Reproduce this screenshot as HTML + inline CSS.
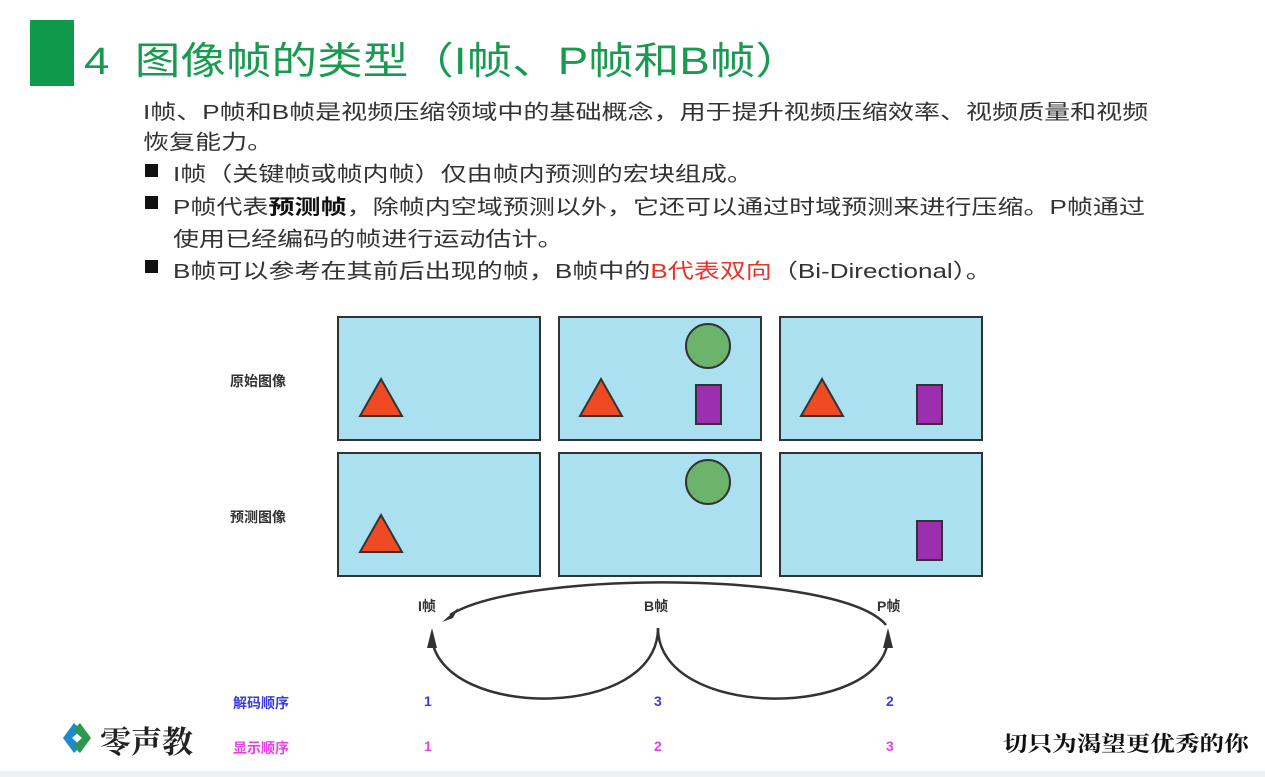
<!DOCTYPE html>
<html><head><meta charset="utf-8"><style>
body{margin:0;width:1265px;height:777px;background:#fff;position:relative;overflow:hidden;font-family:"Liberation Sans","Noto Sans CJK SC",sans-serif;}
.a{position:absolute;white-space:nowrap;}
.t{font-size:20.5px;color:#333;transform:scaleX(1.27);transform-origin:0 0;}
.b{position:absolute;width:13px;height:13px;background:#111;left:145px;}
.p{position:absolute;background:#abe0f0;border:2px solid #333;box-sizing:border-box;width:204px;height:125px;}
.lab{font-size:14px;font-weight:bold;color:#333;}
</style></head><body>
<div class="a" style="left:30px;top:20px;width:44px;height:66px;background:#0e9a48"></div>
<div class="a" style="left:84px;top:30px;font-size:38px;color:#1a9a50;transform:scaleX(1.2);transform-origin:0 0;">4&nbsp;&nbsp;图像帧的类型（I帧、P帧和B帧）</div>
<div class="a t" style="left:143px;top:95px;">I帧、P帧和B帧是视频压缩领域中的基础概念，用于提升视频压缩效率、视频质量和视频</div>
<div class="a t" style="left:143px;top:125px;">恢复能力。</div>
<div class="b" style="top:164px"></div>
<div class="a t" style="left:173px;top:157px;">I帧（关键帧或帧内帧）仅由帧内预测的宏块组成。</div>
<div class="b" style="top:196px"></div>
<div class="a t" style="left:173px;top:190px;">P帧代表<b style="color:#111">预测帧</b>，除帧内空域预测以外，它还可以通过时域预测来进行压缩。P帧通过</div>
<div class="a t" style="left:173px;top:222px;">使用已经编码的帧进行运动估计。</div>
<div class="b" style="top:260px"></div>
<div class="a t" style="left:173px;top:254px;">B帧可以参考在其前后出现的帧，B帧中的<span style="color:#e8322a">B代表双向</span>（Bi-Directional）。</div>

<div class="p" style="left:337px;top:316px"></div>
<div class="p" style="left:558px;top:316px"></div>
<div class="p" style="left:779px;top:316px"></div>
<div class="p" style="left:337px;top:452px"></div>
<div class="p" style="left:558px;top:452px"></div>
<div class="p" style="left:779px;top:452px"></div>
<div class="a lab" style="left:230px;top:371px">原始图像</div>
<div class="a lab" style="left:230px;top:507px">预测图像</div>
<svg class="a" style="left:0;top:0" width="1265" height="777">
<g fill="#f04a24" stroke="#333" stroke-width="2">
<polygon points="381,379 402,416 360,416"/><polygon points="601,379 622,416 580,416"/><polygon points="822,379 843,416 801,416"/>
<polygon points="381,515 402,552 360,552"/></g>
<g fill="#6cb36c" stroke="#333" stroke-width="2"><circle cx="708" cy="346" r="22"/><circle cx="708" cy="482" r="22"/></g>
<g fill="#9b2fae" stroke="#333" stroke-width="2"><rect x="696" y="385" width="25" height="39"/><rect x="917" y="385" width="25" height="39"/><rect x="917" y="521" width="25" height="39"/></g>
<g fill="none" stroke="#333" stroke-width="2.5">
<path d="M886,625 C840,570 520,570 450,615"/>
<path d="M658,628 C658,720 445,720 432,640"/>
<path d="M658,628 C658,720 880,720 888,640"/></g>
<g fill="#333"><polygon points="442,622 458,608 453,618"/><polygon points="432,628 427,648 437,648"/><polygon points="888,628 883,648 893,648"/></g>
</svg>
<div class="a lab" style="left:418px;top:596px">I帧</div>
<div class="a lab" style="left:644px;top:596px">B帧</div>
<div class="a lab" style="left:877px;top:596px">P帧</div>
<div class="a lab" style="left:233px;top:693px;color:#3a3ae0">解码顺序</div>
<div class="a lab" style="left:424px;top:693px;color:#3a3ae0">1</div>
<div class="a lab" style="left:654px;top:693px;color:#3a3ae0">3</div>
<div class="a lab" style="left:886px;top:693px;color:#3a3ae0">2</div>
<div class="a lab" style="left:233px;top:738px;color:#e840e8">显示顺序</div>
<div class="a lab" style="left:424px;top:738px;color:#e840e8">1</div>
<div class="a lab" style="left:654px;top:738px;color:#e840e8">2</div>
<div class="a lab" style="left:886px;top:738px;color:#e840e8">3</div>
<svg class="a" style="left:55px;top:720px" width="44" height="36"><polygon points="8,18 19,3 26,10 17,18 26,26 19,33" fill="#1e88d0"/><polygon points="36,18 25,3 18,10 27,18 18,26 25,33" fill="#2a9a50"/></svg>
<div class="a" style="left:100px;top:717px;font-size:31px;font-weight:bold;color:#222;font-family:'Noto Serif CJK SC',serif;">零声教</div>
<div class="a" style="left:1003px;top:728px;font-size:21px;font-weight:bold;color:#111;font-family:'Noto Serif CJK SC',serif;transform:scaleX(1.17);transform-origin:0 0;">切只为渴望更优秀的你</div>
<div class="a" style="left:0;top:771px;width:1265px;height:6px;background:#eef0f2"></div>
</body></html>
